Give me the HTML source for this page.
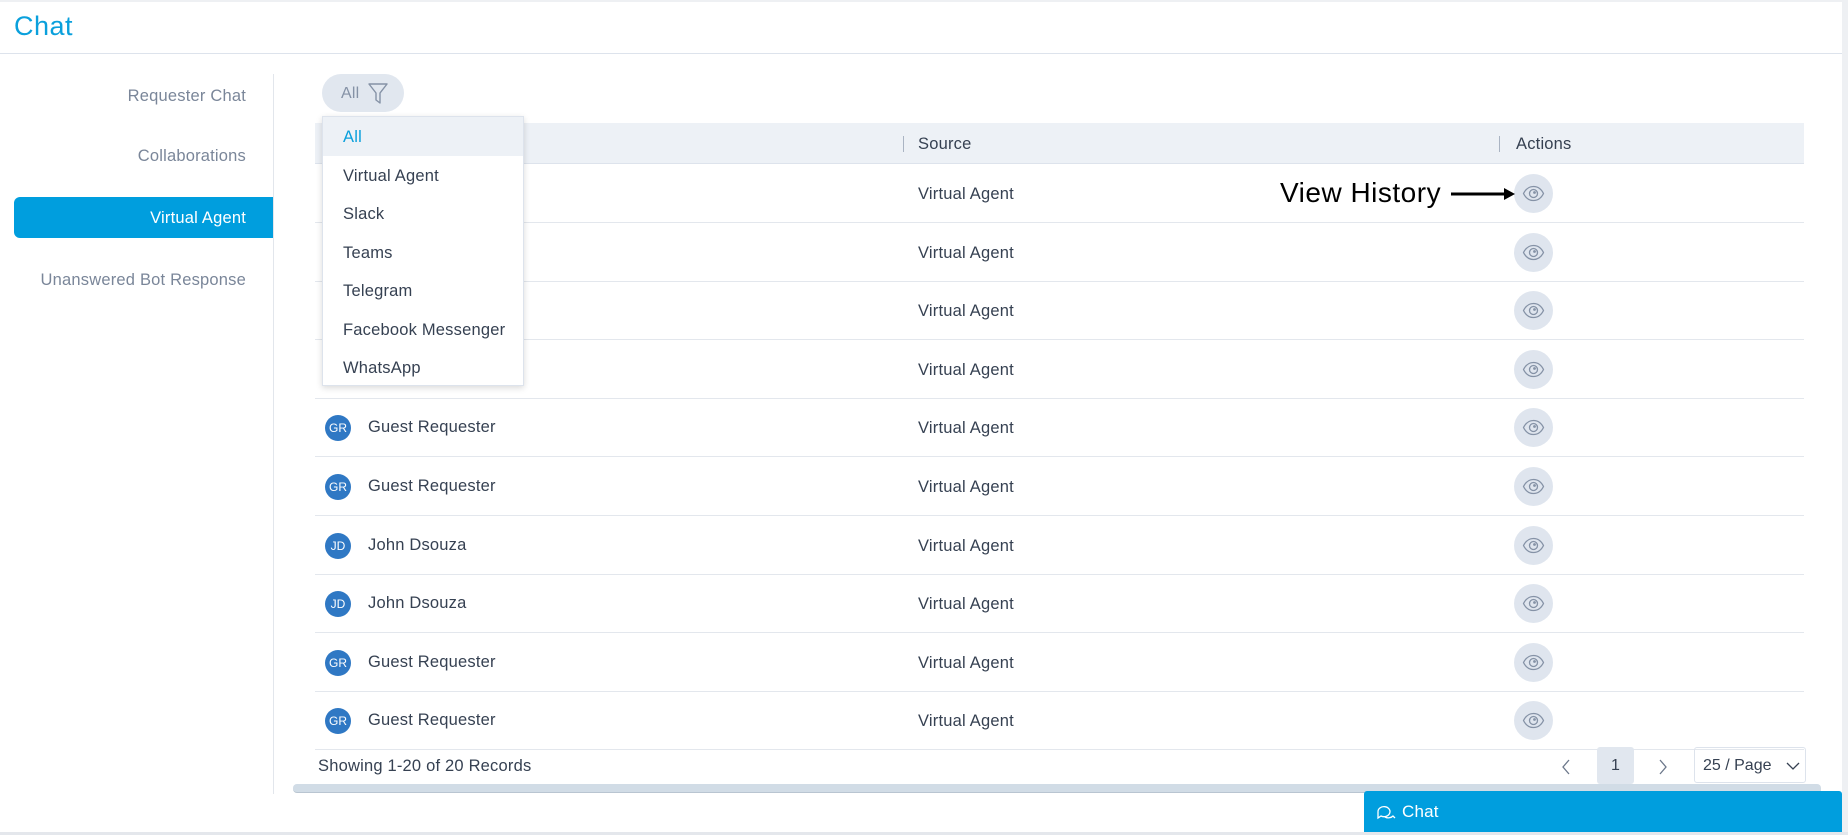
<!DOCTYPE html>
<html><head><meta charset="utf-8"><style>
*{box-sizing:border-box;margin:0;padding:0}
body{width:1848px;height:835px;overflow:hidden;background:#fff;font-family:"Liberation Sans",sans-serif;position:relative;color:#364152;letter-spacing:0.2px}
.abs{position:absolute}
.hdr{left:0;top:0;width:1848px;height:54px;border-bottom:1px solid #dde3ec;border-top:2px solid #eef0f3}
.title{left:14px;top:11px;font-size:27px;color:#0aa0dc;letter-spacing:0.5px}
.side{left:0;width:246px;text-align:right;font-size:16.5px;color:#7a8699}
.active{left:14px;top:197px;width:259px;height:41px;background:#009ede;border-radius:6px 0 0 6px;color:#fff;font-size:16.5px;text-align:right;padding-right:27px;line-height:42px}
.vdiv{left:273px;top:74px;width:1px;height:720px;background:#e2e6ec}
.pill{left:322px;top:74px;width:82px;height:38px;background:#e1e7ef;border-radius:19px;font-size:16px;color:#8592a6;padding:11px 0 0 19px}
.thead{left:315px;top:123px;width:1489px;height:41px;background:#edf1f6;border-bottom:1px solid #dde3ec;font-size:16.5px;color:#364152}
.row{left:315px;width:1489px;height:59px;border-bottom:1px solid #e3e7ed;font-size:16.5px}
.av{position:absolute;left:10px;top:17px;width:26px;height:26px;border-radius:50%;background:#2f78c4;color:#fff;font-size:12px;text-align:center;line-height:26px;letter-spacing:0}
.nm{position:absolute;left:53px;top:20px}
.src{position:absolute;left:603px;top:21px}
.eye{position:absolute;left:1199px;top:10px;width:39px;height:39px;border-radius:50%;background:#dfe5ee}
.dd{left:322px;top:116px;width:202px;height:270px;background:#fff;border:1px solid #dde3ec;box-shadow:0 2px 6px rgba(0,0,0,.15)}
.di{height:38.5px;line-height:40px;padding-left:20px;font-size:16.5px;color:#364152}
</style></head><body>
<div class="abs hdr"></div>
<div class="abs title">Chat</div>
<div class="abs side" style="top:87px">Requester Chat</div>
<div class="abs side" style="top:147px">Collaborations</div>
<div class="abs active">Virtual Agent</div>
<div class="abs side" style="top:271px">Unanswered Bot Response</div>
<div class="abs vdiv"></div>
<div class="abs pill">All <svg style="position:absolute;left:46px;top:9px" width="20" height="22" viewBox="0 0 20 22"><path d="M1 1h18l-7 9v10l-4-3v-7z" fill="none" stroke="#8592a6" stroke-width="1.4" stroke-linejoin="round"/></svg></div>
<div class="abs thead">
<div class="abs" style="left:588px;top:13px;width:1px;height:16px;background:#aab4c3"></div>
<div class="abs" style="left:603px;top:12px">Source</div>
<div class="abs" style="left:1184px;top:13px;width:1px;height:16px;background:#aab4c3"></div>
<div class="abs" style="left:1201px;top:12px">Actions</div>
</div>
<div id="rows"></div>
<script>
var d=[["",""],["",""],["",""],["",""],["GR","Guest Requester"],["GR","Guest Requester"],["JD","John Dsouza"],["JD","John Dsouza"],["GR","Guest Requester"],["GR","Guest Requester"]];
var h="";var eye='<svg style="position:absolute;left:8px;top:10px" width="23" height="19" viewBox="0 0 23 19"><path d="M1.5 9.5C4 4.5 7.5 2.5 11.5 2.5s7.5 2 10 7c-2.5 5-6 7-10 7s-7.5-2-10-7z" fill="none" stroke="#8592a6" stroke-width="1.3"/><circle cx="11.5" cy="9.5" r="4" fill="none" stroke="#8592a6" stroke-width="1.3"/><circle cx="12.5" cy="8.5" r="1.4" fill="#8592a6"/></svg>';
for(var i=0;i<10;i++){var t=164+i*58.6;h+='<div class="abs row" style="top:'+t+'px">'+(d[i][0]?'<div class="av">'+d[i][0]+'</div><div class="nm">'+d[i][1]+'</div>':'')+'<div class="src">Virtual Agent</div><div class="eye">'+eye+'</div></div>';}
document.getElementById("rows").innerHTML=h;
</script>
<div class="abs dd">
<div class="di" style="background:#edf1f6;color:#0aa0dc">All</div>
<div class="di">Virtual Agent</div><div class="di">Slack</div><div class="di">Teams</div><div class="di">Telegram</div><div class="di">Facebook Messenger</div><div class="di">WhatsApp</div>
</div>
<div class="abs" style="left:1280px;top:177px;font-size:28px;color:#000;letter-spacing:0.5px">View History</div>
<svg class="abs" style="left:1450px;top:187px" width="66" height="14"><path d="M1 7h54" stroke="#000" stroke-width="3"/><path d="M54 1l11 6-11 6z" fill="#000"/></svg>
<div class="abs" style="left:318px;top:757px;font-size:16.5px">Showing 1-20 of 20 Records</div>
<svg class="abs" style="left:1560px;top:758px" width="12" height="18"><path d="M9 2L3 9l6 7" fill="none" stroke="#6b778a" stroke-width="1.3"/></svg>
<div class="abs" style="left:1597px;top:747px;width:37px;height:37px;background:#e1e7ef;border-radius:3px;text-align:center;line-height:38px;font-size:16px">1</div>
<svg class="abs" style="left:1657px;top:758px" width="12" height="18"><path d="M3 2l6 7-6 7" fill="none" stroke="#6b778a" stroke-width="1.3"/></svg>
<div class="abs" style="left:1694px;top:747px;width:112px;height:36px;border:1px solid #dde3ec;border-radius:3px;font-size:16px;line-height:35px;padding-left:8px;letter-spacing:0">25 / Page<svg style="position:absolute;left:91px;top:13px" width="14" height="10"><path d="M1 2l6 6 6-6" fill="none" stroke="#364152" stroke-width="1.3"/></svg></div>
<div class="abs" style="left:293px;top:784px;width:1528px;height:9px;background:#d1dce6;border-radius:4px;border-bottom:1px solid #b9c5d1"></div>
<div class="abs" style="left:1364px;top:791px;width:478px;height:41px;background:#009ede;border-radius:3px 3px 0 0;color:#fff;font-size:17px;line-height:42px;padding-left:38px">Chat<svg style="position:absolute;left:12px;top:13px" width="20" height="16"><path d="M2 8a6 5 0 1 1 3 4l-3 2z M9 13a6 5 0 0 0 8-1l2 2" fill="none" stroke="#fff" stroke-width="1.3"/></svg></div>
<div class="abs" style="left:1842px;top:0;width:6px;height:835px;background:#eef0f3"></div>
<div class="abs" style="left:0;top:832px;width:1848px;height:3px;background:#e4e7ec"></div>
</body></html>
